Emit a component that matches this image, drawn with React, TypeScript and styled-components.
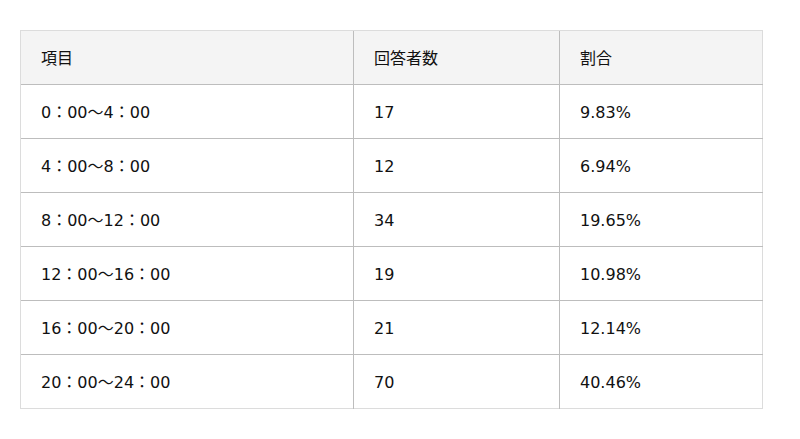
import React from "react";
import styled, { createGlobalStyle } from "styled-components";

const Global = createGlobalStyle`
  html, body { margin: 0; padding: 0; background: #fff; }
  body { font-family: "DejaVu Sans", "Noto Sans CJK JP", sans-serif; color: #111; }
`;

const Page = styled.div`
  padding: 30px 38px 0 20px;
`;

const Table = styled.table`
  width: 742px;
  border-collapse: collapse;
  border: 1px solid #dcdcdc;
  table-layout: fixed;
  font-size: 16px;
`;

const Col = styled.col<{ $w: number }>`
  width: ${(p) => p.$w}px;
`;

const HeadRow = styled.tr`
  background: #f4f4f4;
`;

const Cell = styled.td`
  height: 51px;
  padding: 2px 0 0 20px;
  border-top: 1px solid #bdbdbd;
  border-left: 1px solid #bdbdbd;
  vertical-align: middle;
  line-height: 1;
  &:first-child { border-left-color: #dcdcdc; }
`;

const HeadCell = styled(Cell).attrs({ as: "th" })`
  text-align: left;
  font-weight: normal;
  font-size: 16px;
  border-top-color: #dcdcdc;
`;

const rows = [
  ["0：00〜4：00", "17", "9.83%"],
  ["4：00〜8：00", "12", "6.94%"],
  ["8：00〜12：00", "34", "19.65%"],
  ["12：00〜16：00", "19", "10.98%"],
  ["16：00〜20：00", "21", "12.14%"],
  ["20：00〜24：00", "70", "40.46%"],
];

export default function App() {
  return (
    <>
      <Global />
      <Page>
        <Table>
          <colgroup>
            <Col $w={333} />
            <Col $w={206} />
            <Col $w={203} />
          </colgroup>
          <thead>
            <HeadRow>
              <HeadCell>項目</HeadCell>
              <HeadCell>回答者数</HeadCell>
              <HeadCell>割合</HeadCell>
            </HeadRow>
          </thead>
          <tbody>
            {rows.map((r) => (
              <tr key={r[0]}>
                {r.map((c, i) => (
                  <Cell key={i}>{c}</Cell>
                ))}
              </tr>
            ))}
          </tbody>
        </Table>
      </Page>
    </>
  );
}
